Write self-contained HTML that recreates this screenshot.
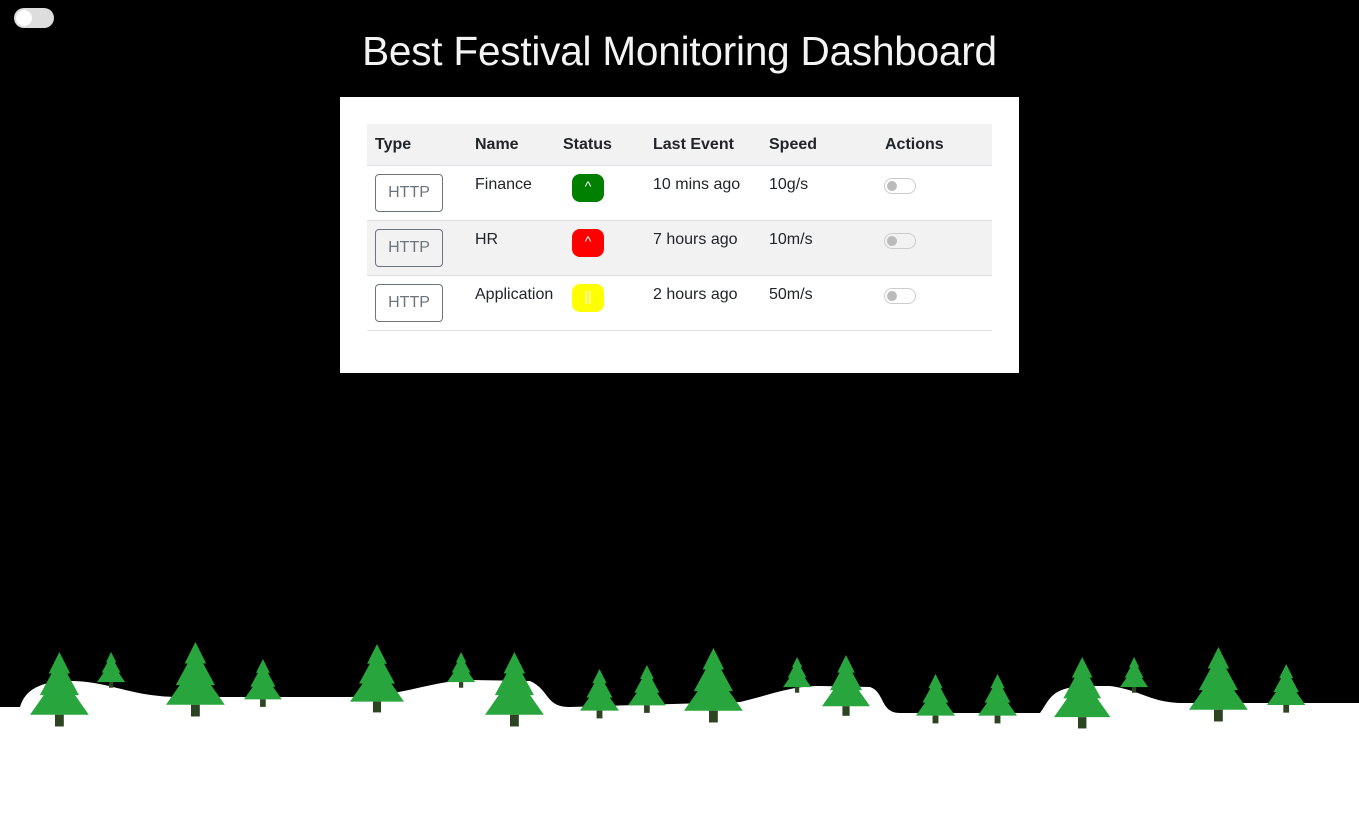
<!DOCTYPE html>
<html><head><style>
body{margin:0;width:1359px;height:819px;background:#000;position:relative;overflow:hidden;font-family:"Liberation Sans",sans-serif;}
.tg{position:absolute;left:14px;top:8px;width:40px;height:20px;border-radius:10px;background:#ddd;}
.tg::after{content:"";position:absolute;left:2px;top:2px;width:16px;height:16px;border-radius:50%;background:#fff;}
h1{position:absolute;top:28px;left:0;width:1359px;text-align:center;margin:0;color:#f4f4f4;font-weight:300;font-size:40.5px;letter-spacing:-0.2px;}
.card{position:absolute;left:340px;top:97px;width:679px;height:276px;background:#fff;}
table{position:absolute;left:27px;top:27px;width:625px;border-collapse:collapse;font-size:16px;color:#212529;}
th{text-align:left;background:#f2f2f2;height:41px;padding:0 0 0 8px;font-weight:bold;border-bottom:1px solid #dee2e6;}
td{height:55px;vertical-align:top;padding:10px 0 0 8px;box-sizing:border-box;border-bottom:1px solid #dee2e6;}
tr.g td{background:#f2f2f2;}
.b{display:inline-block;width:68px;height:38px;border:1px solid #6c757d;border-radius:4px;box-sizing:border-box;color:#6c757d;text-align:center;line-height:36px;margin-top:-2px;}
.s{display:inline-block;width:32px;height:28px;border-radius:8px;color:#fff;text-align:center;line-height:24px;font-size:14px;margin-left:9px;margin-top:-2px;vertical-align:top;}
.sw{display:inline-block;width:32px;height:16px;border:1px solid #ccc;border-radius:8px;box-sizing:border-box;position:relative;margin-top:2px;margin-left:-1px;}
.sw::after{content:"";position:absolute;left:2px;top:2px;width:10px;height:10px;border-radius:50%;background:#bbb;}
svg{position:absolute;left:0;top:0;}
</style></head><body>
<div class="tg"></div>
<h1>Best Festival Monitoring Dashboard</h1>
<div class="card"><table>
<tr><th style="width:92px">Type</th><th style="width:80px">Name</th><th style="width:82px">Status</th><th style="width:108px">Last Event</th><th style="width:108px">Speed</th><th>Actions</th></tr>
<tr><td><span class="b">HTTP</span></td><td>Finance</td><td><span class="s" style="background:#008000">^</span></td><td>10 mins ago</td><td>10g/s</td><td><span class="sw"></span></td></tr>
<tr class="g"><td><span class="b">HTTP</span></td><td>HR</td><td><span class="s" style="background:#f00">^</span></td><td>7 hours ago</td><td>10m/s</td><td><span class="sw"></span></td></tr>
<tr><td><span class="b">HTTP</span></td><td>Application</td><td><span class="s" style="background:#ff0">||</span></td><td>2 hours ago</td><td>50m/s</td><td><span class="sw"></span></td></tr>
</table></div>
<svg width="1359" height="819" viewBox="0 0 1359 819">
<defs><g id="t"><polygon fill="#28a53c" points="30,0 41,22 38,22 50,44 46,44 60,64 0,64 14,44 10,44 22,22 19,22"/><rect x="25.5" y="64" width="9" height="12" fill="#2d4422"/></g></defs>
<path fill="#fff" d="M0,707 L20,707 C25,690 40,681 70,681 C110,681 130,697 180,697 L350,697 C400,697 430,681 470,680 L530,681 C550,690 545,707 570,707 L740,702 C770,695 790,686 820,686 L870,687 C885,692 880,713 900,713 L1040,713 C1050,700 1050,686 1090,686 L1110,686 C1140,690 1150,702 1180,703 L1359,703 L1359,819 L0,819 Z"/>
<use href="#t" transform="translate(30,652) scale(0.98)"/>
<use href="#t" transform="translate(97,652) scale(0.47)"/>
<use href="#t" transform="translate(166,642) scale(0.98)"/>
<use href="#t" transform="translate(244,659) scale(0.63)"/>
<use href="#t" transform="translate(350,644) scale(0.9)"/>
<use href="#t" transform="translate(447,652) scale(0.47)"/>
<use href="#t" transform="translate(485,652) scale(0.98)"/>
<use href="#t" transform="translate(580,669) scale(0.65)"/>
<use href="#t" transform="translate(628,665) scale(0.63)"/>
<use href="#t" transform="translate(684,648) scale(0.98)"/>
<use href="#t" transform="translate(783,657) scale(0.47)"/>
<use href="#t" transform="translate(822,655) scale(0.8)"/>
<use href="#t" transform="translate(916,674) scale(0.65)"/>
<use href="#t" transform="translate(978,674) scale(0.65)"/>
<use href="#t" transform="translate(1054,657) scale(0.94)"/>
<use href="#t" transform="translate(1120,657) scale(0.47)"/>
<use href="#t" transform="translate(1189,647) scale(0.98)"/>
<use href="#t" transform="translate(1267,664) scale(0.64)"/>
</svg>
</body></html>
